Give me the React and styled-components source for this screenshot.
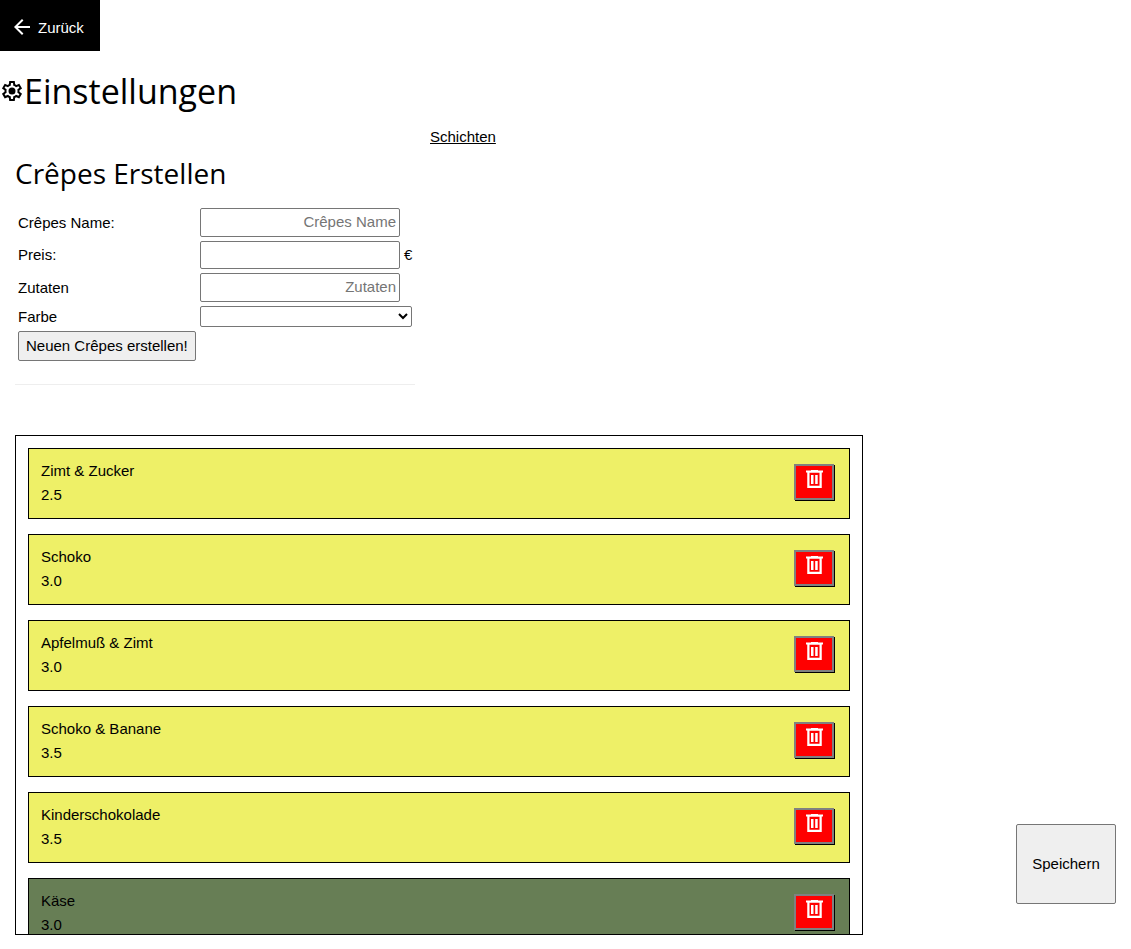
import React from "react";
import styled, { createGlobalStyle } from "styled-components";

const GlobalStyle = createGlobalStyle`
  *, *::before, *::after { box-sizing: border-box; }
  body {
    margin: 0;
    background: #fff;
    color: #000;
    font: 15px/22px "Liberation Sans", Arial, sans-serif;
  }
  button, input, select { font: inherit; color: inherit; }
`;

const BackButton = styled.button`
  display: flex;
  align-items: flex-end;
  gap: 4px;
  width: 100px;
  height: 51px;
  padding: 0 10px 12px;
  border: 0;
  background: #000;
  color: #fff;
  cursor: pointer;
`;

const Icon = styled.svg`
  display: block;
  flex: none;
  width: 24px;
  height: 24px;
  fill: currentColor;
`;

const Title = styled.h1`
  display: flex;
  align-items: center;
  margin: 13px 0 8px;
  font: 400 34px/54px "Open Sans", sans-serif;
`;

const Columns = styled.div`
  display: flex;
  align-items: flex-start;
  gap: 15px;
  padding: 0 15px;
`;

const FormColumn = styled.section`
  width: 400px;
`;

const Subtitle = styled.h2`
  margin: 25px 0 12px;
  font: 400 28px/45px "Open Sans", sans-serif;
`;

const Form = styled.form`
  display: flex;
  flex-direction: column;
  align-items: flex-start;
  gap: 4px;
  padding: 0 3px;
`;

const Field = styled.div`
  display: grid;
  grid-template-columns: 178px auto auto;
  align-items: center;
  gap: 4px;
  line-height: 20px;
`;

const TextInput = styled.input`
  width: 200px;
  height: ${(p) => (p.inputMode === "decimal" ? 28 : 29)}px;
  padding: 0 3px 2px;
  border: 1px solid #767676;
  border-radius: 2px;
  background: #fff;
  text-align: right;
  &::placeholder { color: #757575; }
`;

const ColorSelect = styled.select`
  width: 212px;
  height: 21px;
  border: 1px solid #767676;
  border-radius: 2px;
  background: #fff;
`;

const PlainButton = styled.button`
  padding: 3px 7px;
  border: 1px solid #767676;
  border-radius: 2px;
  background: #efefef;
  cursor: pointer;
`;

const Divider = styled.hr`
  margin: 23px 0 50px;
  border: 0;
  border-top: 1px solid #eee;
`;

const ShiftLink = styled.a`
  color: inherit;
`;

const CrepeList = styled.ul`
  width: 75%;
  height: 500px;
  margin: 0 0 14px 15px;
  padding: 12px;
  border: 1px solid #000;
  list-style: none;
  overflow: hidden;
`;

const CrepeRow = styled.li`
  display: flex;
  align-items: center;
  justify-content: space-between;
  margin-bottom: 15px;
  padding: 10px 15px 11px 12px;
  border: 1px solid #000;
  background: ${(p) => p.$color};
  line-height: 24px;
`;

const DeleteButton = styled.button`
  display: flex;
  justify-content: center;
  width: 40px;
  height: 36px;
  margin-bottom: 2px;
  padding: 1px 0 0;
  border: 2px solid #808080;
  background: #f00;
  box-shadow: 1px 1px 0 #000;
  color: #fff;
  cursor: pointer;
`;

const SaveButton = styled(PlainButton)`
  position: fixed;
  right: 15px;
  bottom: 45px;
  width: 100px;
  height: 80px;
`;

const crepes = [
  { name: "Zimt & Zucker", price: "2.5", color: "#eef067" },
  { name: "Schoko", price: "3.0", color: "#eef067" },
  { name: "Apfelmuß & Zimt", price: "3.0", color: "#eef067" },
  { name: "Schoko & Banane", price: "3.5", color: "#eef067" },
  { name: "Kinderschokolade", price: "3.5", color: "#eef067" },
  { name: "Käse", price: "3.0", color: "#677e55" },
];

const paths = {
  back: "m12 20-8-8 8-8 1.425 1.4-5.6 5.6H20v2H7.825l5.6 5.6Z",
  settings:
    "m9.25 22-.4-3.2q-.325-.125-.612-.3-.288-.175-.563-.375L4.7 19.375l-2.75-4.75 2.575-1.95Q4.5 12.5 4.5 12.337v-.675q0-.162.025-.337L1.95 9.375l2.75-4.75 2.975 1.25q.275-.2.575-.375.3-.175.6-.3l.4-3.2h5.5l.4 3.2q.325.125.613.3.287.175.562.375l2.975-1.25 2.75 4.75-2.575 1.95q.025.175.025.337v.675q0 .163-.05.338l2.575 1.95-2.75 4.75-2.95-1.25q-.275.2-.575.375-.3.175-.6.3l-.4 3.2ZM12 15.5a3.5 3.5 0 1 0 0-7 3.5 3.5 0 0 0 0 7ZM11 20h1.975l.35-2.65q.775-.2 1.438-.588.662-.387 1.212-.937l2.475 1.025.975-1.7-2.15-1.625q.125-.35.175-.738.05-.387.05-.787t-.05-.788q-.05-.387-.175-.737l2.15-1.625-.975-1.7-2.475 1.05q-.55-.575-1.212-.963-.663-.387-1.438-.587L13 4h-1.975l-.35 2.65q-.775.2-1.437.587-.663.388-1.213.938L5.55 7.15l-.975 1.7 2.15 1.6q-.125.375-.175.75-.05.375-.05.8 0 .4.05.775t.175.75l-2.15 1.625.975 1.7 2.475-1.05q.55.575 1.213.963.662.387 1.437.587Z",
  trash:
    "M5.25 21V5.5H4V3.5h5V3h7v.5h5v2h-1.25V21ZM17.5 5.75H7.5V18.75h10ZM9 17h2.5V8H9Zm4.2 0h2.5V8h-2.5Z",
};

function Glyph({ name }) {
  return (
    <Icon viewBox="0 0 24 24" aria-hidden="true">
      <path fillRule="evenodd" d={paths[name]} />
    </Icon>
  );
}

export default function App() {
  return (
    <>
      <GlobalStyle />
      <BackButton type="button">
        <Glyph name="back" />
        Zurück
      </BackButton>
      <Title>
        <Glyph name="settings" />
        Einstellungen
      </Title>
      <Columns>
        <FormColumn>
          <Subtitle>Crêpes Erstellen</Subtitle>
          <Form onSubmit={(e) => e.preventDefault()}>
            <Field>
              <label htmlFor="name">Crêpes Name:</label>
              <TextInput id="name" placeholder="Crêpes Name" />
            </Field>
            <Field>
              <label htmlFor="price">Preis:</label>
              <TextInput id="price" inputMode="decimal" />
              <span>€</span>
            </Field>
            <Field>
              <label htmlFor="ingredients">Zutaten</label>
              <TextInput id="ingredients" placeholder="Zutaten" />
            </Field>
            <Field>
              <label htmlFor="color">Farbe</label>
              <ColorSelect id="color" defaultValue="">
                <option value="" aria-label="Farbe" />
              </ColorSelect>
            </Field>
            <PlainButton type="submit">Neuen Crêpes erstellen!</PlainButton>
          </Form>
          <Divider />
        </FormColumn>
        <ShiftLink href="#schichten">Schichten</ShiftLink>
      </Columns>
      <CrepeList>
        {crepes.map((crepe) => (
          <CrepeRow key={crepe.name} $color={crepe.color}>
            <div>
              <div>{crepe.name}</div>
              <div>{crepe.price}</div>
            </div>
            <DeleteButton type="button" aria-label={`${crepe.name} löschen`}>
              <Glyph name="trash" />
            </DeleteButton>
          </CrepeRow>
        ))}
      </CrepeList>
      <SaveButton type="button">Speichern</SaveButton>
    </>
  );
}
